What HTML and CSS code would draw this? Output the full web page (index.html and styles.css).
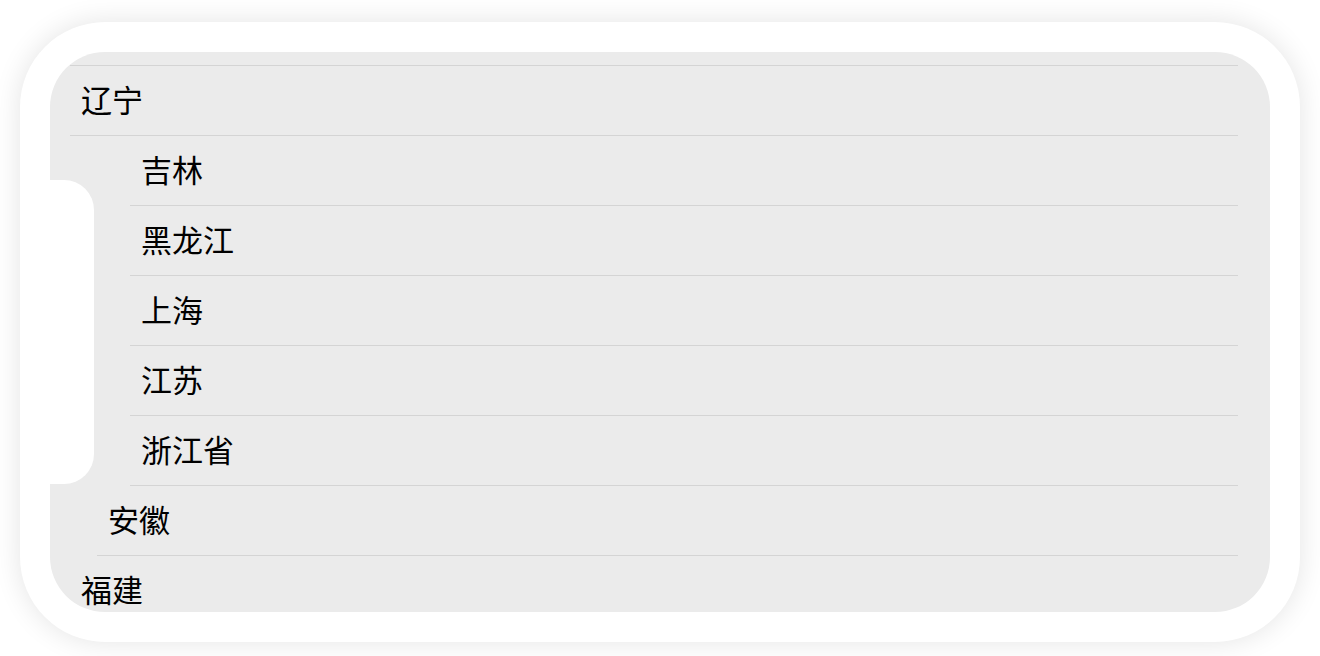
FILE: index.html
```html
<!DOCTYPE html>
<html lang="zh">
<head>
<meta charset="utf-8">
<title>省份列表</title>
<link rel="stylesheet" href="styles.css">
</head>
<body>
<div class="device">
  <div class="screen">
    <ul class="list">
      <li class="row"><div class="cell"></div></li>
      <li class="row"><div class="cell">辽宁</div></li>
      <li class="row"><div class="cell cell-notch">吉林</div></li>
      <li class="row"><div class="cell cell-notch">黑龙江</div></li>
      <li class="row"><div class="cell cell-notch">上海</div></li>
      <li class="row"><div class="cell cell-notch">江苏</div></li>
      <li class="row"><div class="cell cell-notch">浙江省</div></li>
      <li class="row"><div class="cell cell-edge">安徽</div></li>
      <li class="row"><div class="cell">福建</div></li>
    </ul>
    <div class="notch"></div>
  </div>
</div>
</body>
</html>
```
FILE: styles.css
```css
html, body {
  margin: 0;
  padding: 0;
  background: #ffffff;
}
body {
  width: 1320px;
  height: 656px;
  overflow: hidden;
  font-family: "Noto Sans CJK SC", "Noto Sans", sans-serif;
}
.device {
  box-sizing: border-box;
  width: 1280px;
  height: 620px;
  margin: 22px 0 0 20px;
  padding: 30px;
  background: #ffffff;
  border-radius: 85px;
  box-shadow: 0 0 28px rgba(0, 0, 0, 0.11);
}
.screen {
  position: relative;
  width: 1220px;
  height: 560px;
  border-radius: 55px;
  overflow: hidden;
  background: #ebebeb;
}
.notch {
  position: absolute;
  left: 0;
  top: 128px;
  width: 44px;
  height: 304px;
  background: #ffffff;
  border-radius: 0 30px 30px 0;
}
.list {
  list-style: none;
  margin: -56px 0 0 0;
  padding: 0;
}
.row {
  display: flex;
  height: 70px;
}
.cell {
  box-sizing: border-box;
  flex: 1;
  display: flex;
  align-items: center;
  height: 70px;
  margin: 0 32px 0 20px;
  padding: 0 0 5px 11px;
  border-bottom: 1px solid #d4d4d4;
  font-size: 31px;
  color: #000000;
  line-height: 1;
}
.cell-notch {
  margin-left: 80px;
}
.cell-edge {
  margin-left: 47px;
}
```
